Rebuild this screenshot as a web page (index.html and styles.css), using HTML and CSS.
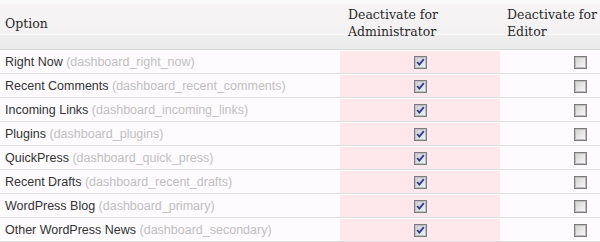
FILE: index.html
```html
<!DOCTYPE html>
<html lang="en">
<head>
    <meta charset="UTF-8">
    <title>Dashboard widgets</title>
    <link rel="stylesheet" href="styles.css">
</head>
<body>

<!-- shared checkbox drawings -->
<svg class="defs" width="0" height="0" aria-hidden="true">
    <defs>
        <linearGradient id="box-off" x1="0" y1="0" x2="1" y2="1">
            <stop offset="0" stop-color="#d0d0cc"/>
            <stop offset="1" stop-color="#fbfbfb"/>
        </linearGradient>
        <linearGradient id="box-on" x1="0" y1="0" x2="1" y2="1">
            <stop offset="0" stop-color="#c5c8d4"/>
            <stop offset="1" stop-color="#f6f6f8"/>
        </linearGradient>
        <symbol id="cb-off" viewBox="0 0 13 13">
            <rect x="0.5" y="0.5" width="12" height="12" fill="url(#box-off)" stroke="#7c7c7c"/>
            <rect x="1.5" y="1.5" width="10" height="10" fill="none" stroke="#bdbdbd"/>
        </symbol>
        <symbol id="cb-on" viewBox="0 0 13 13">
            <rect x="0.5" y="0.5" width="12" height="12" fill="url(#box-on)" stroke="#7c7c7c"/>
            <rect x="1.5" y="1.5" width="10" height="10" fill="none" stroke="#bcbec8"/>
            <path d="M3.2 6.2 L5.4 8.6 L9.8 3.2" fill="none" stroke="#34428c" stroke-width="1.9"/>
        </symbol>
    </defs>
</svg>

<table class="widefat">
    <colgroup>
        <col class="col-option">
        <col class="col-admin">
        <col class="col-editor">
    </colgroup>
    <thead>
        <tr>
            <th class="th-option">Option</th>
            <th>Deactivate for Administrator</th>
            <th class="th-last">Deactivate for Editor</th>
        </tr>
    </thead>
    <tbody>
        <tr>
            <td>Right Now <span class="slug">(dashboard_right_now)</span></td>
            <td class="admin"><svg class="cb"><use href="#cb-on"/></svg></td>
            <td class="editor"><svg class="cb"><use href="#cb-off"/></svg></td>
        </tr>
        <tr>
            <td>Recent Comments <span class="slug">(dashboard_recent_comments)</span></td>
            <td class="admin"><svg class="cb"><use href="#cb-on"/></svg></td>
            <td class="editor"><svg class="cb"><use href="#cb-off"/></svg></td>
        </tr>
        <tr>
            <td>Incoming Links <span class="slug">(dashboard_incoming_links)</span></td>
            <td class="admin"><svg class="cb"><use href="#cb-on"/></svg></td>
            <td class="editor"><svg class="cb"><use href="#cb-off"/></svg></td>
        </tr>
        <tr>
            <td>Plugins <span class="slug">(dashboard_plugins)</span></td>
            <td class="admin"><svg class="cb"><use href="#cb-on"/></svg></td>
            <td class="editor"><svg class="cb"><use href="#cb-off"/></svg></td>
        </tr>
        <tr>
            <td>QuickPress <span class="slug">(dashboard_quick_press)</span></td>
            <td class="admin"><svg class="cb"><use href="#cb-on"/></svg></td>
            <td class="editor"><svg class="cb"><use href="#cb-off"/></svg></td>
        </tr>
        <tr>
            <td>Recent Drafts <span class="slug">(dashboard_recent_drafts)</span></td>
            <td class="admin"><svg class="cb"><use href="#cb-on"/></svg></td>
            <td class="editor"><svg class="cb"><use href="#cb-off"/></svg></td>
        </tr>
        <tr>
            <td>WordPress Blog <span class="slug">(dashboard_primary)</span></td>
            <td class="admin"><svg class="cb"><use href="#cb-on"/></svg></td>
            <td class="editor"><svg class="cb"><use href="#cb-off"/></svg></td>
        </tr>
        <tr>
            <td>Other WordPress News <span class="slug">(dashboard_secondary)</span></td>
            <td class="admin"><svg class="cb"><use href="#cb-on"/></svg></td>
            <td class="editor"><svg class="cb"><use href="#cb-off"/></svg></td>
        </tr>
    </tbody>
</table>

</body>
</html>
```

FILE: styles.css
```css
body {
    margin: 0;
    background: #fdfbfd;
    font-family: "Liberation Sans", Arial, sans-serif;
    font-size: 12.5px;
    color: #333;
}

.defs {
    display: block;
    width: 0;
    height: 0;
    overflow: hidden;
}

.widefat {
    width: 600px;
    table-layout: fixed;
    border-collapse: separate;
    border-spacing: 0;
}

.col-option { width: 340px; }
.col-admin { width: 160px; }
.col-editor { width: 100px; }

/* header row */
.widefat th {
    font-family: "DejaVu Serif", Georgia, serif;
    font-weight: normal;
    font-size: 12.5px;
    line-height: 17px;
    color: #2a2a2a;
    text-align: left;
    vertical-align: middle;
    padding: 6px 4px 9px 8px;
    background: linear-gradient(to bottom,
        #fafafa 0, #fafafa 4px,
        #f6f4f4 4px, #f3f1f1 34px,
        #fbfbfb 34px, #fbfbfb 35px,
        #eeeeee 35px, #ececec 49px);
    border-bottom: 1px solid #d6d6d6;
}

.widefat .th-option {
    padding-left: 5px;
}

.widefat .th-last {
    padding-left: 7px;
    padding-right: 0;
}

/* body rows */
.widefat td {
    padding: 0 5px;
    line-height: 22px;
    white-space: nowrap;
    border-top: 1px solid #fff;
    border-bottom: 1px solid #dfdfdf;
}

.slug {
    color: #c0c0c0;
}

.widefat td.admin {
    background: #ffe8eb;
    text-align: center;
}

.widefat td.editor {
    text-align: right;
    padding-right: 13px;
}

.cb {
    width: 13px;
    height: 13px;
    vertical-align: -3px;
}
```
